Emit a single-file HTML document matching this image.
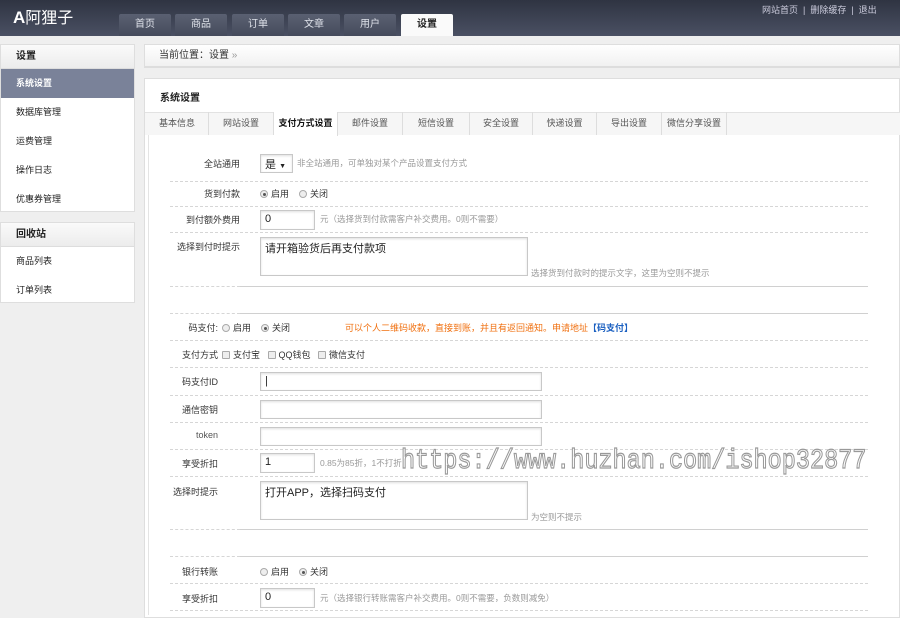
<!DOCTYPE html>
<html><head><meta charset="utf-8"><style>
*{margin:0;padding:0;box-sizing:border-box}
body{width:900px;height:612px;overflow:hidden;background:#efefef;font-family:"Liberation Sans","Noto Sans CJK SC",sans-serif;font-size:9px;color:#333;position:relative}
.a{position:absolute}
.hdr{left:0;top:0;width:900px;height:36px;background:linear-gradient(#2f3442,#4a5063)}
.tab{top:14px;height:22px;width:52px;background:linear-gradient(#5a6072,#454b5c);color:#dfe2ea;font-size:10px;text-align:center;line-height:22px;border-radius:2px 2px 0 0}
.tab.on{background:#fafafa;color:#222;font-weight:bold}
.box{background:#fff;border:1px solid #dedede}
.side div{height:29px;line-height:29px;padding-left:15px;font-size:9px;color:#222}
.sh{background:linear-gradient(#fafafa,#ececec);border-bottom:1px solid #ddd;height:24px!important;line-height:24px!important;font-size:10px!important;font-weight:bold}
.lb{text-align:right;font-size:9px;color:#333}
.dash{height:0;border-top:1px dashed #d6d6d6}
.sol{height:0;border-top:1px solid #d0d0d0}
.inp{background:#fff;border:1px solid #c8c8c8;box-shadow:inset 0 1px 2px #e0e0e0;font-size:11px;padding:2px 4px;color:#222}
.g{color:#999;font-size:8.5px}
.rd{display:inline-block;width:8px;height:8px;border-radius:50%;border:1px solid #aaa;background:#eee;vertical-align:-1px;margin-right:3px;position:relative}
.rd.on::after{content:"";position:absolute;left:1.5px;top:1.5px;width:3px;height:3px;border-radius:50%;background:#555}
.cb{display:inline-block;width:8px;height:8px;border:1px solid #aaa;background:#eee;border-radius:1px;vertical-align:-1px;margin-right:3px}
.t2{top:112px;height:23px;line-height:23px;text-align:center;font-size:9px;color:#555;border-right:1px solid #ddd}
</style></head><body>
<div class="a hdr"></div>
<div class="a" style="left:13px;top:6px;color:#fff;font-size:17px;font-weight:bold;line-height:24px">A<span style="font-weight:normal;font-size:16px">阿狸子</span></div>
<div class="a tab" style="left:119px">首页</div>
<div class="a tab" style="left:175px">商品</div>
<div class="a tab" style="left:232px">订单</div>
<div class="a tab" style="left:288px">文章</div>
<div class="a tab" style="left:344px">用户</div>
<div class="a tab on" style="left:401px">设置</div>
<div class="a" style="left:762px;top:3px;color:#ccd;font-size:9px">网站首页 &nbsp;|&nbsp; 删除缓存 &nbsp;|&nbsp; 退出</div>

<div class="a box side" style="left:0;top:44px;width:135px;height:168px">
<div class="sh">设置</div>
<div style="background:#7a8299;color:#fff;font-weight:bold">系统设置</div>
<div>数据库管理</div><div>运费管理</div><div>操作日志</div><div>优惠券管理</div></div>
<div class="a box side" style="left:0;top:222px;width:135px;height:81px">
<div class="sh">回收站</div><div>商品列表</div><div>订单列表</div></div>

<div class="a box" style="left:144px;top:44px;width:756px;height:24px;background:linear-gradient(#fff,#f1f1f1);border-bottom:2px solid #ddd;line-height:22px;padding-left:14px;font-size:10px;color:#333">当前位置：设置 <span style="color:#999">»</span></div>

<div class="a box" style="left:144px;top:78px;width:756px;height:540px"></div>
<div class="a" style="left:160px;top:89px;font-size:10px;font-weight:bold;color:#222">系统设置</div>
<div class="a" style="left:145px;top:112px;width:755px;height:23px;background:#f6f6f6;border-top:1px solid #e2e2e2"></div>
<div class="a t2" style="left:146px;width:63px">基本信息</div>
<div class="a t2" style="left:209px;width:65px">网站设置</div>
<div class="a t2" style="left:274px;width:64px;background:#fff;color:#111;font-weight:bold;height:24px">支付方式设置</div>
<div class="a t2" style="left:338px;width:65px">邮件设置</div>
<div class="a t2" style="left:403px;width:67px">短信设置</div>
<div class="a t2" style="left:470px;width:63px">安全设置</div>
<div class="a t2" style="left:533px;width:64px">快递设置</div>
<div class="a t2" style="left:597px;width:65px">导出设置</div>
<div class="a t2" style="left:662px;width:65px">微信分享设置</div>
<div class="a" style="left:148px;top:135px;width:1px;height:480px;background:#e4e4e4"></div>

<div class="a lb" style="left:160px;top:157px;width:80px">全站通用</div>
<div class="a inp" style="left:260px;top:154px;width:33px;height:19px;font-size:11px;padding:1px 4px">是 <span style="font-size:7px">▼</span></div>
<div class="a g" style="left:297px;top:157px">非全站通用，可单独对某个产品设置支付方式</div>
<div class="a dash" style="left:170px;top:181px;width:698px"></div>
<div class="a lb" style="left:160px;top:187px;width:80px">货到付款</div>
<div class="a" style="left:260px;top:187px"><span class="rd on"></span>启用 &nbsp;&nbsp; <span class="rd"></span>关闭</div>
<div class="a dash" style="left:170px;top:206px;width:698px"></div>
<div class="a lb" style="left:160px;top:213px;width:80px">到付额外费用</div>
<div class="a inp" style="left:260px;top:210px;width:55px;height:20px">0</div>
<div class="a g" style="left:320px;top:213px">元（选择货到付款需客户补交费用。0则不需要）</div>
<div class="a dash" style="left:170px;top:232px;width:698px"></div>
<div class="a lb" style="left:160px;top:240px;width:80px">选择到付时提示</div>
<div class="a inp" style="left:260px;top:237px;width:268px;height:39px">请开箱验货后再支付款项</div>
<div class="a g" style="left:531px;top:267px">选择货到付款时的提示文字，这里为空则不提示</div>
<div class="a dash" style="left:170px;top:286px;width:70px"></div>
<div class="a sol" style="left:240px;top:286px;width:628px"></div>

<div class="a dash" style="left:170px;top:313px;width:70px"></div>
<div class="a sol" style="left:240px;top:313px;width:628px"></div>
<div class="a lb" style="left:160px;top:321px;width:58px">码支付:</div>
<div class="a" style="left:222px;top:321px"><span class="rd"></span>启用 &nbsp;&nbsp; <span class="rd on"></span>关闭</div>
<div class="a" style="left:345px;top:321px;color:#f07010">可以个人二维码收款，直接到账，并且有返回通知。申请地址<b style="color:#1a5fc0">【码支付】</b></div>
<div class="a dash" style="left:170px;top:340px;width:698px"></div>
<div class="a lb" style="left:160px;top:348px;width:58px">支付方式</div>
<div class="a" style="left:222px;top:348px"><span class="cb"></span>支付宝 &nbsp;&nbsp;<span class="cb"></span>QQ钱包 &nbsp;&nbsp;<span class="cb"></span>微信支付</div>
<div class="a dash" style="left:170px;top:367px;width:698px"></div>
<div class="a lb" style="left:160px;top:375px;width:58px">码支付ID</div>
<div class="a inp" style="left:260px;top:372px;width:282px;height:19px">|</div>
<div class="a dash" style="left:170px;top:395px;width:698px"></div>
<div class="a lb" style="left:160px;top:403px;width:58px">通信密钥</div>
<div class="a inp" style="left:260px;top:400px;width:282px;height:19px"></div>
<div class="a dash" style="left:170px;top:422px;width:698px"></div>
<div class="a lb" style="left:160px;top:430px;width:58px;color:#555">token</div>
<div class="a inp" style="left:260px;top:427px;width:282px;height:19px"></div>
<div class="a dash" style="left:170px;top:449px;width:698px"></div>
<div class="a lb" style="left:160px;top:457px;width:58px">享受折扣</div>
<div class="a inp" style="left:260px;top:453px;width:55px;height:20px">1</div>
<div class="a g" style="left:320px;top:457px">0.85为85折，1不打折</div>
<div class="a" style="left:401px;top:447px;font-family:'Liberation Mono',monospace;font-size:23.5px;color:#fff;-webkit-text-stroke:1px #999;line-height:30px;transform:scaleY(1.2);transform-origin:left center">https://www.huzhan.com/ishop32877</div>
<div class="a dash" style="left:170px;top:476px;width:698px"></div>
<div class="a lb" style="left:160px;top:485px;width:58px">选择时提示</div>
<div class="a inp" style="left:260px;top:481px;width:268px;height:39px">打开APP，选择扫码支付</div>
<div class="a g" style="left:531px;top:511px">为空则不提示</div>
<div class="a dash" style="left:170px;top:529px;width:70px"></div>
<div class="a sol" style="left:240px;top:529px;width:628px"></div>
<div class="a dash" style="left:170px;top:556px;width:70px"></div>
<div class="a sol" style="left:240px;top:556px;width:628px"></div>
<div class="a lb" style="left:160px;top:565px;width:58px">银行转账</div>
<div class="a" style="left:260px;top:565px"><span class="rd"></span>启用 &nbsp;&nbsp; <span class="rd on"></span>关闭</div>
<div class="a dash" style="left:170px;top:583px;width:698px"></div>
<div class="a lb" style="left:160px;top:592px;width:58px">享受折扣</div>
<div class="a inp" style="left:260px;top:588px;width:55px;height:20px">0</div>
<div class="a g" style="left:320px;top:592px">元（选择银行转账需客户补交费用。0则不需要，负数则减免）</div>
<div class="a dash" style="left:170px;top:610px;width:698px"></div>
</body></html>
